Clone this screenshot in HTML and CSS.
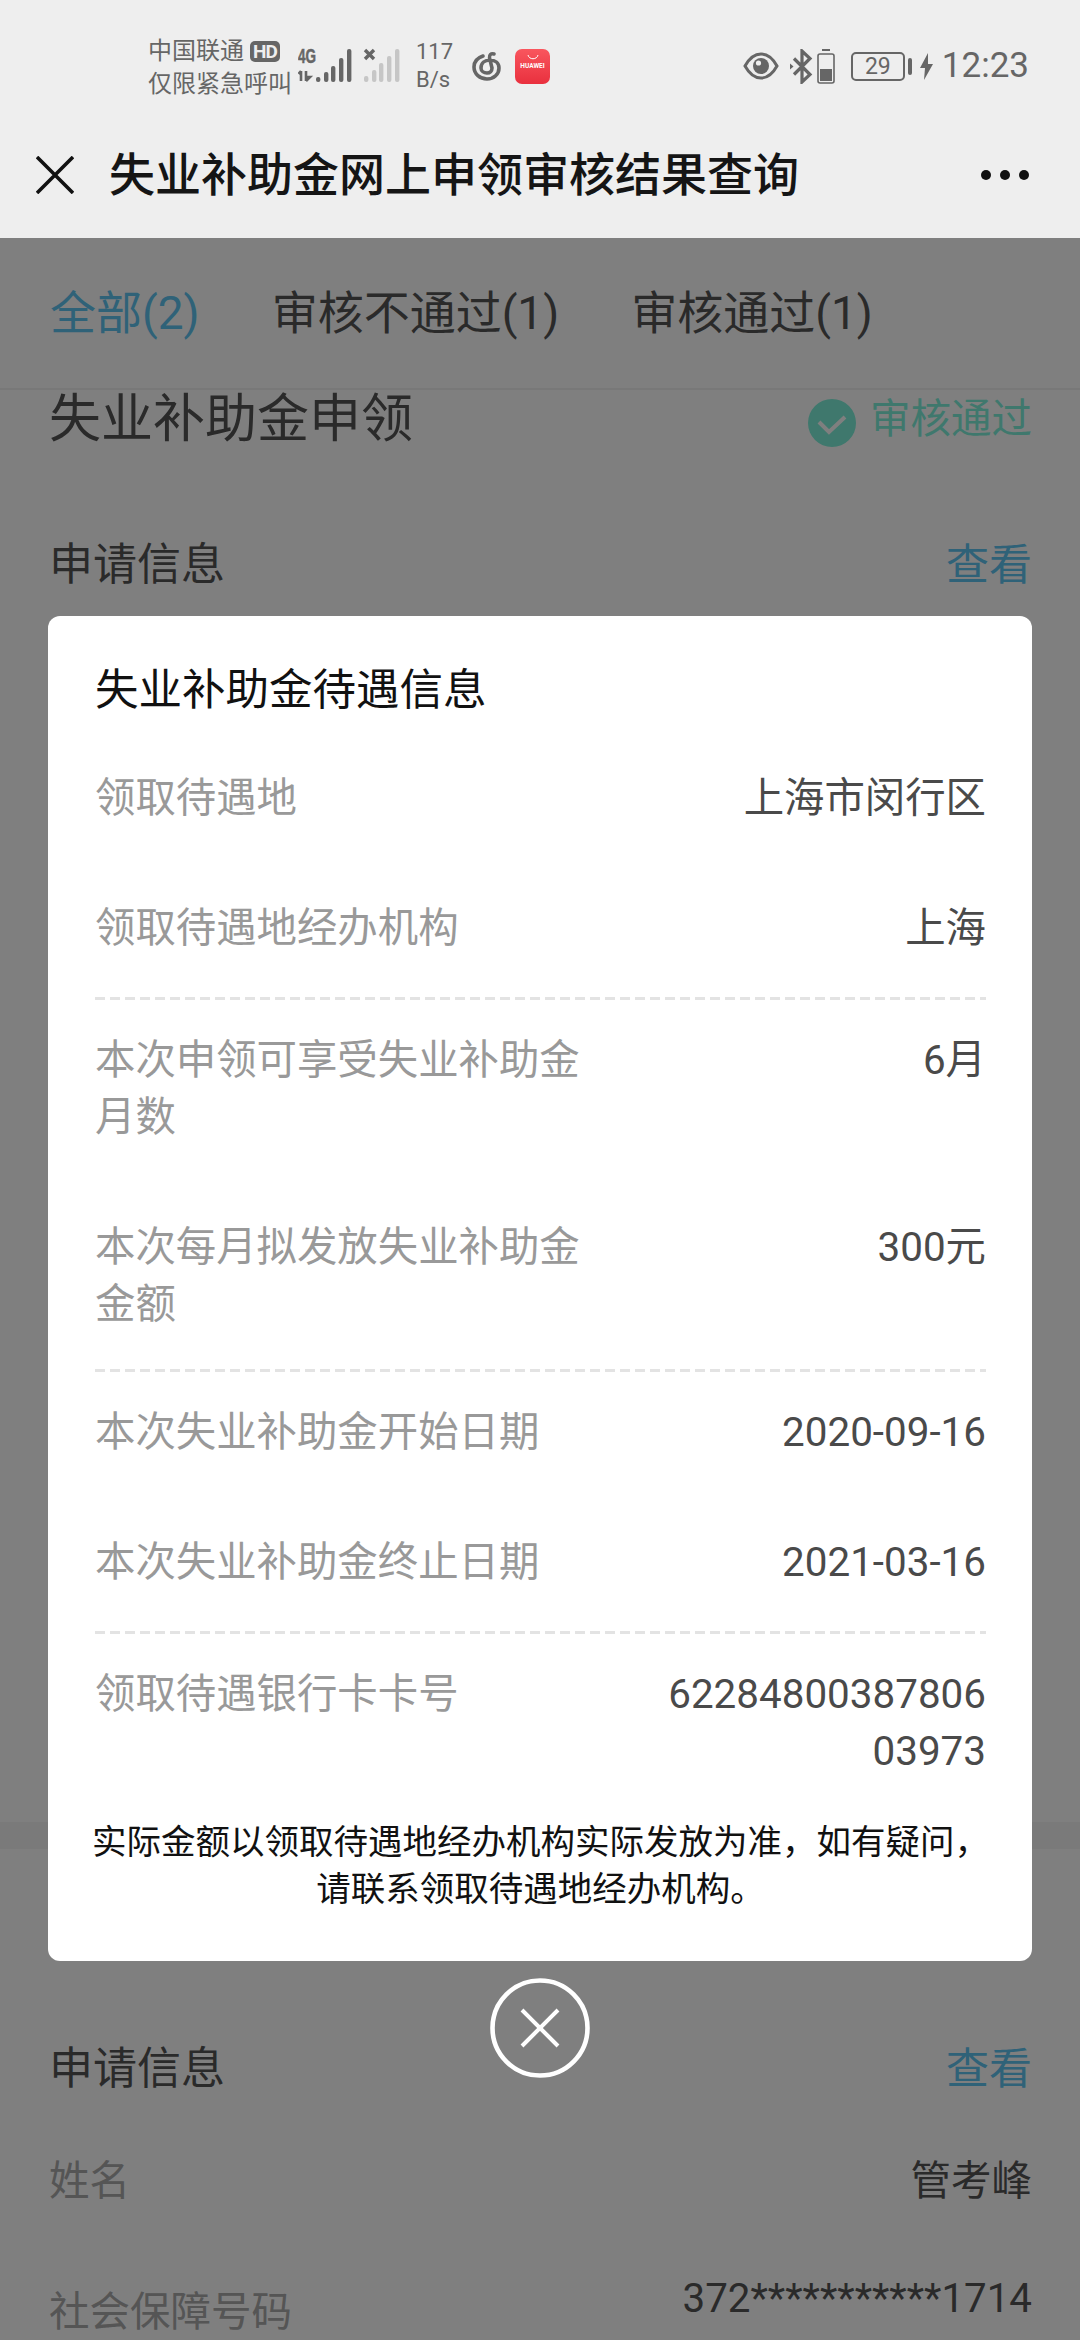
FILE: index.html
```html
<!DOCTYPE html>
<html lang="zh-CN">
<head>
  <meta charset="UTF-8">
  <meta name="viewport" content="width=device-width, initial-scale=1.0">
  <title>失业补助金网上申领审核结果查询</title>
  <link rel="stylesheet" href="styles.css">
</head>
<body>
  <header class="top">
    <div class="status-bar">
      <div class="carrier">
        <div class="carrier-line">中国联通<span class="hd">HD</span></div>
        <div class="carrier-line">仅限紧急呼叫</div>
      </div>
      <svg class="signal-main" width="62" height="48" viewBox="0 -5 62 48">
        <text x="0" y="16" class="net-text" textLength="18" lengthAdjust="spacingAndGlyphs">4G</text>
        <path d="M3 34V24M3 24L0.5 27M8 24V34M8 34L12 30H8" fill="none" stroke="#666" stroke-width="2.6"/>
        <rect x="18" y="30" width="4.4" height="5" rx="2" fill="#666"/>
        <rect x="26" y="25" width="4.4" height="10" rx="2" fill="#666"/>
        <rect x="33" y="19" width="4.4" height="16" rx="2" fill="#666"/>
        <rect x="41" y="11" width="4.4" height="24" rx="2" fill="#666"/>
        <rect x="49" y="2" width="4.4" height="33" rx="2" fill="#666"/>
      </svg>
      <svg class="signal-sub" width="40" height="36" viewBox="0 1 40 36">
        <path d="M2 3L11 12M11 3L2 12" stroke="#666" stroke-width="3.4"/>
        <rect x="1" y="29" width="4.4" height="6" rx="2" fill="#c6c6c6"/>
        <rect x="9" y="23" width="4.4" height="12" rx="2" fill="#c6c6c6"/>
        <rect x="16" y="16" width="4.4" height="19" rx="2" fill="#c6c6c6"/>
        <rect x="24" y="9" width="4.4" height="26" rx="2" fill="#c6c6c6"/>
        <rect x="32" y="2" width="4.4" height="33" rx="2" fill="#c6c6c6"/>
      </svg>
      <div class="speed">117<br>B/s</div>
      <svg class="netease" width="30" height="32" viewBox="0 0 30 32">
        <path d="M11 6C5 8 2 12 2 17C2 24 8 29 15 29C22 29 27 24 27 18C27 13 23 10 18 10C13 10 9 13 9 18C9 21 12 23 15 23C18 23 20 21 20 18L17.5 8C17 5 19 3 22 4" fill="none" stroke="#666" stroke-width="3.6" stroke-linecap="round"/>
      </svg>
      <div class="app-icon">
        <svg width="12" height="6" viewBox="0 0 12 6"><path d="M1 1C2 6 10 6 11 1" fill="none" stroke="#fff" stroke-width="1"/></svg>
        <span>HUAWEI</span>
      </div>
      <div class="status-right">
        <svg width="36" height="28" viewBox="0 0 36 28">
          <path d="M2 14C7 5 12 2 18 2S29 5 34 14C29 23 24 26 18 26S7 23 2 14Z" fill="none" stroke="#666" stroke-width="3"/>
          <circle cx="18" cy="14" r="8" fill="#666"/>
          <circle cx="15.5" cy="11" r="2.6" fill="#eee"/>
        </svg>
        <svg class="bt" width="24" height="35" viewBox="0 0 24 35">
          <path d="M4 9.5L20 25.5L12 33V2L20 9.5L4 25.5" fill="none" stroke="#666" stroke-width="3.2"/>
          <path d="M0 14.5L3.5 17.5L0 20.5Z" fill="#666"/>
        </svg>
        <svg class="mini-battery" width="18" height="35" viewBox="0 0 18 35">
          <rect x="5" y="0" width="8" height="2" fill="#666"/>
          <rect x="1" y="5" width="16" height="29" rx="2" fill="none" stroke="#666" stroke-width="1.6"/>
          <rect x="3" y="20" width="12" height="12" fill="#666"/>
        </svg>
        <div class="battery"><span>29</span></div>
        <div class="battery-nub"></div>
        <svg class="bolt" width="13" height="27" viewBox="0 0 13 27">
          <path d="M8 0L0 15H5L4 27L13 11H8Z" fill="#666"/>
        </svg>
        <div class="clock">12:23</div>
      </div>
    </div>
    <nav class="nav-bar">
      <svg class="nav-close" width="38" height="38" viewBox="0 0 38 38">
        <path d="M1 1L37 37M37 1L1 37" stroke="#111" stroke-width="3.6"/>
      </svg>
      <h1 class="nav-title">失业补助金网上申领审核结果查询</h1>
      <div class="nav-more"><i></i><i></i><i></i></div>
    </nav>
  </header>

  <main class="page">
    <div class="tabs">
      <span class="tab tab-active">全部(2)</span>
      <span class="tab">审核不通过(1)</span>
      <span class="tab">审核通过(1)</span>
    </div>
    <div class="section-head">
      <span class="section-title">失业补助金申领</span>
      <div class="pass">
        <svg class="pass-icon" width="48" height="48" viewBox="0 0 48 48">
          <circle cx="24" cy="24" r="24" fill="#7ef0da"/>
          <path d="M11 23L21 33L37 18" fill="none" stroke="#fff" stroke-width="4"/>
        </svg>
        <span>审核通过</span>
      </div>
    </div>
    <div class="info-head info-head-first">
      <span>申请信息</span><a class="link">查看</a>
    </div>
    <div class="band"></div>
    <div class="info-head info-head-second">
      <span>申请信息</span><a class="link">查看</a>
    </div>
    <div class="info-row">
      <span class="info-label">姓名</span><span class="info-value">管考峰</span>
    </div>
    <div class="info-row info-row-ssn">
      <span class="info-label">社会保障号码</span><span class="info-value">372***********1714</span>
    </div>
  </main>

  <div class="overlay">
    <section class="modal">
      <h2 class="modal-title">失业补助金待遇信息</h2>
      <div class="group">
        <div class="row"><div class="label">领取待遇地</div><div class="value">上海市闵行区</div></div>
        <div class="row"><div class="label">领取待遇地经办机构</div><div class="value">上海</div></div>
      </div>
      <div class="group">
        <div class="row"><div class="label">本次申领可享受失业补助金月数</div><div class="value">6月</div></div>
        <div class="row row-tight"><div class="label">本次每月拟发放失业补助金金额</div><div class="value">300元</div></div>
      </div>
      <div class="group">
        <div class="row"><div class="label">本次失业补助金开始日期</div><div class="value">2020-09-16</div></div>
        <div class="row"><div class="label">本次失业补助金终止日期</div><div class="value">2021-03-16</div></div>
      </div>
      <div class="group group-last">
        <div class="row"><div class="label">领取待遇银行卡卡号</div><div class="value">6228480038780603973</div></div>
      </div>
      <p class="note">实际金额以领取待遇地经办机构实际发放为准，如有疑问，<br>请联系领取待遇地经办机构。</p>
    </section>
    <svg class="modal-close" width="100" height="100" viewBox="0 0 100 100">
      <circle cx="50" cy="50" r="47.5" fill="none" stroke="#fff" stroke-width="4.6"/>
      <path d="M32 32L68 68M68 32L32 68" stroke="#fff" stroke-width="4"/>
    </svg>
  </div>
</body>
</html>
```

FILE: styles.css
```css
* {
  box-sizing: border-box;
}

html, body {
  margin: 0;
  padding: 0;
  height: 2340px;
  overflow: hidden;
}

body {
  background-color: #fff;
  font-family: Roboto, "Noto Sans CJK SC", sans-serif;
  color: #555;
}

/* status bar + title bar sit above the dim layer */
.top {
  position: relative;
  z-index: 2;
  background-color: #eee;
  height: 238px;
}

.status-bar {
  display: flex;
  align-items: center;
  height: 132px;
  padding: 0 51px 0 148px;
  color: #666;
}

.carrier {
  font-size: 24px;
  line-height: 33px;
  width: 150px;
  white-space: nowrap;
  margin-top: 4px;
}

.carrier-line {
  display: flex;
  align-items: center;
}

.hd {
  margin-left: 6px;
  width: 30px;
  height: 21px;
  line-height: 21px;
  border-radius: 5px;
  background-color: #666;
  color: #eee;
  font-size: 19px;
  font-weight: 700;
  letter-spacing: -1px;
  text-align: center;
}

.net-text {
  font-family: "Liberation Sans", sans-serif;
  font-size: 20px;
  font-weight: 700;
  fill: #666;
  stroke: #666;
  stroke-width: 0.5px;
}

.signal-sub {
  margin-left: 3px;
}

.speed {
  margin-left: 13px;
  width: 37px;
  font-size: 22px;
  line-height: 28px;
  white-space: nowrap;
}

.netease {
  margin-left: 19px;
}

.app-icon {
  margin-left: 13px;
  width: 35px;
  height: 35px;
  border-radius: 7px;
  background: linear-gradient(#f9565e, #e9303e);
  color: #fff;
  display: flex;
  flex-direction: column;
  align-items: center;
  padding-top: 5px;
  font-size: 6.5px;
  line-height: 13px;
  font-weight: 700;
  white-space: nowrap;
}

.app-icon svg {
  display: block;
}

.status-right {
  display: flex;
  align-items: center;
  margin-left: auto;
}

.bt {
  margin-left: 11px;
}

.mini-battery {
  margin-left: 3px;
}

.battery {
  margin-left: 16px;
  width: 54px;
  height: 29px;
  border: 2px solid #666;
  border-radius: 5px;
  text-align: center;
  font-size: 23px;
  line-height: 25px;
}

.battery-nub {
  margin-left: 3px;
  width: 4px;
  height: 17px;
  border-radius: 2px;
  background-color: #666;
}

.bolt {
  margin-left: 8px;
}

.clock {
  margin-left: 9px;
  font-size: 35px;
  line-height: 40px;
}

.nav-bar {
  display: flex;
  align-items: center;
  height: 106px;
  padding: 0 51px 20px 36px;
}

.nav-close {
  flex: none;
}

.nav-title {
  margin: 0 0 0 35px;
  font-size: 46px;
  line-height: 60px;
  font-weight: 500;
  color: #151515;
  white-space: nowrap;
}

.nav-more {
  display: flex;
  gap: 9px;
  margin-left: auto;
}

.nav-more i {
  display: block;
  width: 10px;
  height: 10px;
  border-radius: 50%;
  background-color: #111;
}

/* the page behind the dialog */
.page {
  height: 2102px;
  overflow: hidden;
}

.tabs {
  display: flex;
  gap: 72px;
  height: 152px;
  padding: 0 0 8px 50px;
  align-items: center;
  border-bottom: 2px solid #f0f0f0;
  font-size: 46px;
  color: #555;
}

.tab-active {
  color: #5ec4f0;
}

.section-head {
  display: flex;
  justify-content: space-between;
  padding: 0 48px 0 49px;
  height: 60px;
  line-height: 60px;
}

.section-title {
  font-size: 52px;
  color: #555;
}

.pass {
  display: flex;
  align-items: flex-start;
  gap: 14px;
  font-size: 40.5px;
  line-height: 58px;
  color: #7ef0da;
}

.pass-icon {
  margin-top: 9px;
}

.info-head {
  display: flex;
  justify-content: space-between;
  padding: 0 48px 0 49px;
  height: 60px;
  line-height: 60px;
  font-size: 44px;
  color: #555;
}

.info-head-first {
  margin-top: 85px;
}

.info-head-second {
  margin-top: 190px;
}

.link {
  font-size: 43px;
  color: #5ec4f0;
}

.band {
  margin-top: 1227px;
  height: 27px;
  background-color: #f4f4f4;
}

.info-row {
  display: flex;
  justify-content: space-between;
  align-items: flex-start;
  margin-top: 52px;
  padding: 0 48px 0 49px;
  font-size: 40.5px;
  line-height: 60px;
  color: #555;
}

.info-label {
  color: #aaa;
}

.info-row-ssn {
  margin-top: 58px;
}

.info-row-ssn .info-label {
  margin-top: 13px;
}

.info-row-ssn .info-value {
  font-size: 40.3px;
}

/* dim layer and dialog */
.overlay {
  position: fixed;
  top: 238px;
  left: 0;
  right: 0;
  bottom: 0;
  z-index: 1;
  background-color: rgba(0, 0, 0, 0.5);
  display: flex;
  flex-direction: column;
  align-items: center;
  padding: 378px 48px 0;
}

.modal {
  width: 984px;
  height: 1345px;
  padding: 45px 46px 0 47px;
  background-color: #fff;
  border-radius: 12px;
}

.modal-title {
  margin: 0 0 16px;
  font-size: 43.5px;
  line-height: 60px;
  font-weight: 400;
  color: #111;
}

.group {
  margin-bottom: -1px;
  padding-bottom: 3px;
  background-image: repeating-linear-gradient(90deg, #e3e3e3 0, #e3e3e3 10px, transparent 10px, transparent 15px);
  background-size: 100% 3px;
  background-position: left bottom;
  background-repeat: no-repeat;
}

.group-last {
  background-image: none;
}

.row {
  display: flex;
  justify-content: space-between;
  padding: 33px 0 40px;
  font-size: 40.4px;
  line-height: 57px;
}

.row-tight {
  padding-bottom: 36px;
}

.label {
  width: 500px;
  color: #999;
}

.value {
  width: 320px;
  text-align: right;
  word-break: break-all;
  color: #4a4a4a;
}

.note {
  margin: -4px -8px 0;
  font-size: 34.5px;
  line-height: 47px;
  text-align: center;
  color: #111;
}

.modal-close {
  flex: none;
  margin-top: 17px;
}
```
